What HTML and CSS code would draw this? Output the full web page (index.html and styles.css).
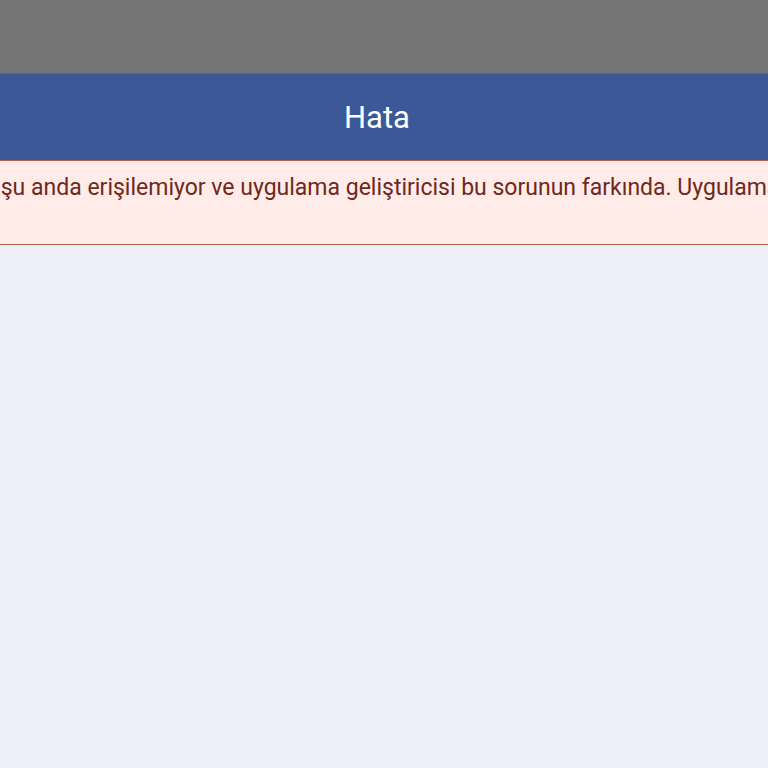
FILE: index.html
```html
<!DOCTYPE html>
<html lang="tr">
<head>
<meta charset="utf-8">
<title>Hata</title>
<link rel="stylesheet" href="styles.css">
</head>
<body>
<div class="statusbar"></div>
<header class="titlebar"><h1 class="title">Hata</h1></header>
<div class="errorbox">
  <p class="message">Uygulama şu anda erişilemiyor ve uygulama geliştiricisi bu sorunun farkında. Uygulama yeniden etkinleştirildiğinde giriş yapabileceksin.</p>
</div>
</body>
</html>
```
FILE: styles.css
```css
html, body {
  margin: 0;
  padding: 0;
  height: 100%;
  overflow: hidden;
}
body {
  background: #edf0f8;
  font-family: Roboto, "Noto Sans", "Liberation Sans", sans-serif;
}
.statusbar {
  height: 73px;
  background: #757575;
}
.titlebar {
  height: 87px;
  background: #3b5998;
  border-top: 1px solid #4a67a3;
  box-sizing: border-box;
  display: flex;
  align-items: center;
  justify-content: center;
  padding-right: 14px;
}
.title {
  margin: 0;
  color: #ffffff;
  font-size: 31px;
  font-weight: 400;
  line-height: 1;
}
.errorbox {
  height: 85px;
  box-sizing: border-box;
  background: #ffebe8;
  border-top: 1px solid #b5644b;
  border-bottom: 1px solid #b5644b;
  overflow: hidden;
}
.message {
  margin: 0;
  padding-top: 13px;
  color: #6e281c;
  font-size: 23px;
  line-height: 28px;
  white-space: nowrap;
  text-indent: -107px;
}
```
